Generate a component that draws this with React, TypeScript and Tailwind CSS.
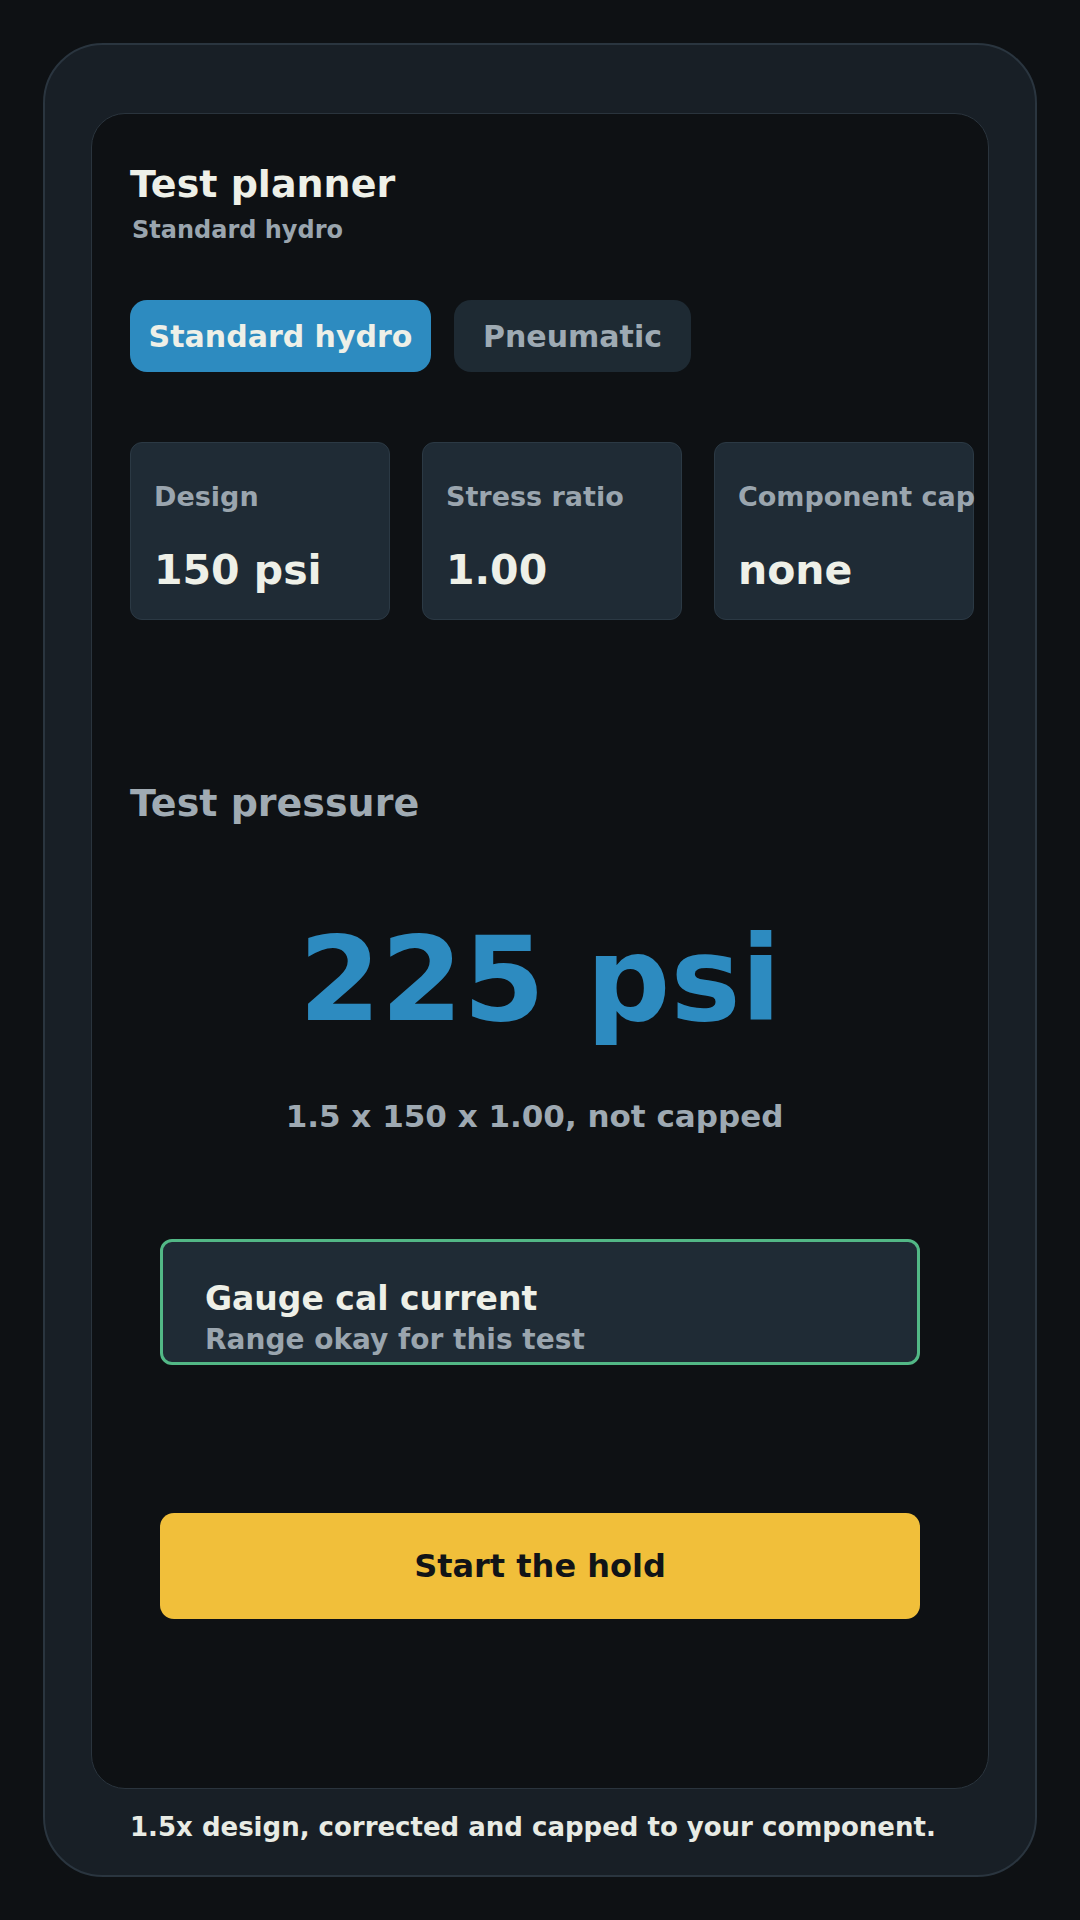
import React from 'react';

const stats = [
  { label: 'Design', value: '150 psi' },
  { label: 'Stress ratio', value: '1.00' },
  { label: 'Component cap', value: 'none' },
];

export default function App() {
  return (
    <div
      className="w-[1080px] h-[1920px] bg-[#0e1114] pt-[43px] px-[43px] font-bold"
      style={{ fontFamily: '"DejaVu Sans", Verdana, sans-serif' }}
    >
      <div className="h-[1834px] rounded-[60px] border-2 border-[#2a353f] bg-[#181f26] px-[46px] pt-[68px]">
        <div className="h-[1676px] rounded-[34px] border border-[#2a343d] bg-[#0e1114] px-[38px] pt-[48px] flex flex-col">
          <h1 className="text-[38px] leading-[44px] text-[#eef0e8]">Test planner</h1>
          <p className="mt-[9px] pl-[2px] text-[24px] leading-[30px] text-[#9aa5ae]">Standard hydro</p>

          <div className="mt-[55px] flex gap-[23px]">
            <button className="w-[301px] h-[72px] rounded-[17px] bg-[#2d8bc0] text-[30px] text-[#eef0e8]">
              Standard hydro
            </button>
            <button className="w-[237px] h-[72px] rounded-[17px] bg-[#1e2a33] text-[30px] text-[#9eaab3]">
              Pneumatic
            </button>
          </div>

          <div className="mt-[70px] flex gap-[32px]">
            {stats.map((s) => (
              <div
                key={s.label}
                className="w-[260px] h-[178px] shrink-0 rounded-[12px] border border-[#2b3944] bg-[#1f2b35] px-[23px] pt-[38px]"
              >
                <div className="text-[27px] leading-[32px] text-[#9aa5ae] whitespace-nowrap">{s.label}</div>
                <div className="mt-[33px] text-[41px] leading-[48px] text-[#eef0e8]">{s.value}</div>
              </div>
            ))}
          </div>

          <h2 className="mt-[161px] text-[38px] leading-[44px] text-[#a0abb3]">Test pressure</h2>

          <div className="mt-[95px] text-center text-[118px] leading-none text-[#2d8bc0]">225 psi</div>

          <p className="mt-[60px] pr-[11px] text-center text-[31px] leading-[36px] text-[#9ea9b2]">
            1.5 x 150 x 1.00, not capped
          </p>

          <div className="mt-[105px] mx-[30px] h-[126px] rounded-[12px] border-[3px] border-[#52b886] bg-[#1f2b35] px-[42px] pt-[37px]">
            <div className="text-[33px] leading-[40px] text-[#eef0e8]">Gauge cal current</div>
            <div className="mt-[4px] text-[28px] leading-[34px] text-[#9aa5ae]">Range okay for this test</div>
          </div>

          <button className="mt-[148px] mx-[30px] h-[106px] rounded-[14px] bg-[#f1bf3a] text-[32px] text-[#111417]">
            Start the hold
          </button>
        </div>

        <p className="mt-[22px] px-[39px] text-[26px] leading-[32px] text-[#e8ebe4]">
          1.5x design, corrected and capped to your component.
        </p>
      </div>
    </div>
  );
}
